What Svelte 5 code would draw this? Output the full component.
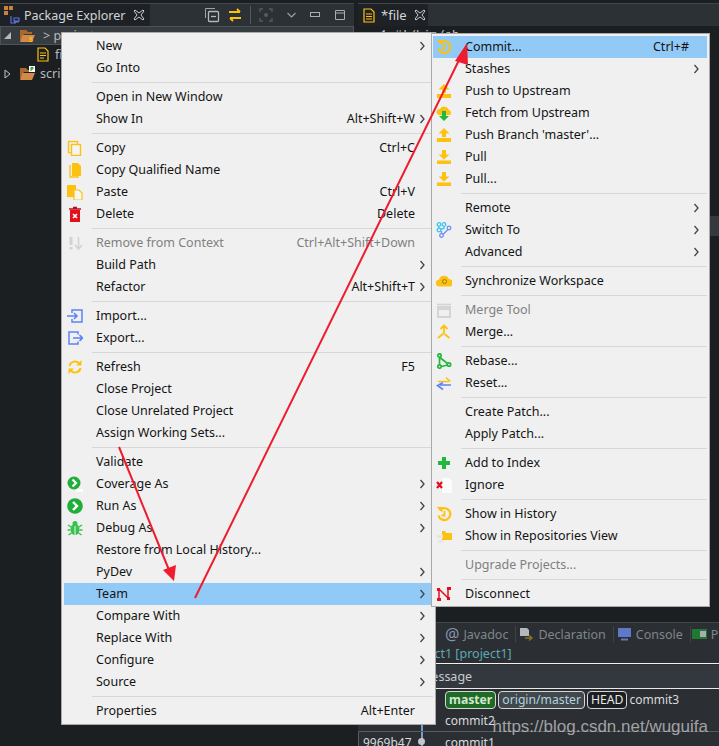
<script>
  const icons = {
    copy: '<rect x="1.500" y="1.500" width="9" height="11" fill="none" stroke="#fdc20f" stroke-width="1.400"/><rect x="4.500" y="4.500" width="9" height="11" fill="#f4f4f4" stroke="#fdc20f" stroke-width="1.400"/>',
    copyq: '<path d="M5 1h6l3 3v10H5z" fill="#fdc20f"/><path d="M3 3v12h9" fill="none" stroke="#fdc20f" stroke-width="1.400"/>',
    paste: '<path d="M0 1h9v12H0z" fill="#fdc20f"/><path d="M7 6h5l3 3v7H7z" fill="#f6f6f6" stroke="#fdc20f" stroke-width="1.200"/>',
    del: '<path d="M3 4h10v12H3z" fill="#e0101c"/><path d="M2 3h12M6 1.500h4" stroke="#c00d18" stroke-width="1.600"/><path d="M6 8l4 4M10 8l-4 4" stroke="#fff" stroke-width="1.600"/>',
    remove: '<path d="M4 2v8M4 12v2.500" stroke="#d2d2d2" stroke-width="3"/><path d="M11.500 2v11M8 10l3.500 4 3.500-4" fill="none" stroke="#d2d2d2" stroke-width="1.600"/>',
    imp: '<path d="M5 5V2h10v12H5v-3" fill="none" stroke="#5c82f5" stroke-width="1.500"/><path d="M0 8h9M7 5l3 3-3 3" fill="none" stroke="#5c82f5" stroke-width="1.600"/>',
    exp: '<path d="M11 4.500V2H2v12h9v-2.500" fill="none" stroke="#5c82f5" stroke-width="1.500"/><path d="M6 8h9M12.500 5l3 3-3 3" fill="none" stroke="#5c82f5" stroke-width="1.600"/>',
    refresh: '<path d="M2.500 7a5.500 5.500 0 0 1 10-2M13.500 9a5.500 5.500 0 0 1-10 2" fill="none" stroke="#fdc20f" stroke-width="2"/><path d="M14.500 1v5.500H9zM1.500 15V9.500H7z" fill="#fdc20f"/>',
    cover: '<circle cx="7" cy="7" r="6.500" fill="#1fae3a"/><path d="M5.500 3.500L9 7l-3.500 3.500" fill="none" stroke="#fff" stroke-width="2.200"/><rect x="9" y="13" width="7" height="3" fill="#fff"/>',
    run: '<circle cx="8" cy="8" r="7.800" fill="#1fae3a"/><path d="M6 4l4 4-4 4" fill="none" stroke="#fff" stroke-width="2.400"/>',
    debug: '<ellipse cx="8" cy="9.500" rx="4.500" ry="5.500" fill="#36c24c"/><circle cx="8" cy="3.500" r="2.500" fill="#36c24c"/><path d="M1 5l3 2M15 5l-3 2M.5 10h3M15.500 10h-3M1.500 15l3-2M14.500 15l-3-2" stroke="#36c24c" stroke-width="1.500"/><path d="M8 6v9" stroke="#f0f0f0" stroke-width="1"/>',
    history: '<path d="M3.500 4.500A6 6 0 1 1 2.500 9.500" fill="none" stroke="#fdc20f" stroke-width="2.200"/><path d="M.5 1h6v5.500z" fill="#fdc20f"/><path d="M8.500 5v4.500H5.500" fill="none" stroke="#fdc20f" stroke-width="1.800"/>',
    push: '<path d="M8 1l5.500 5.500H10V10H6V6.500H2.500z" fill="#fdc20f"/><path d="M1 11h14v4H1z" fill="#fdc20f"/>',
    pull: '<path d="M8 10.500L2.500 5.500H6V1h4v4.500h3.500z" fill="#fdc20f"/><path d="M1 11.500h14v3.500H1z" fill="#fdc20f"/>',
    fetch: '<path d="M3 10a3 3 0 0 1 1-6 5 5 0 0 1 9 1 3 3 0 0 1 1 5z" fill="#fdc20f"/><path d="M8 16l-5-5h3V6h4v5h3z" fill="#22b83c"/>',
    sw: '<g fill="none" stroke="#38c8ee" stroke-width="1.300"><circle cx="3" cy="2.500" r="1.800"/><circle cx="3" cy="8" r="1.800"/><circle cx="8" cy="2.500" r="1.800"/><path d="M3 4.500v2M8 4.500v2l-4 1"/></g><g fill="none" stroke="#6f8df5" stroke-width="1.300"><circle cx="5.500" cy="13.500" r="1.800"/><circle cx="13" cy="6" r="1.800"/><path d="M5.500 11.500V9M7 12.500l5-5"/></g>',
    sync: '<path d="M3.500 13.500a3.400 3.400 0 0 1-.500-6.800 5.200 5.200 0 0 1 10-.5 3.600 3.600 0 0 1 .500 7.300z" fill="#fdc20f"/><circle cx="8.500" cy="8.500" r="2" fill="none" stroke="#9a7a1a" stroke-width="1"/>',
    mtool: '<path d="M2 5h12v10H2z" fill="none" stroke="#d4d4d4" stroke-width="2"/><path d="M1 2.500h14" stroke="#d4d4d4" stroke-width="1.600"/><path d="M2 7h12" stroke="#d4d4d4" stroke-width="2"/>',
    merge: '<path d="M8 9V1.500M4.500 5L8 1.500 11.500 5M8 9l-6 5M8.500 10l5 4" fill="none" stroke="#fdc20f" stroke-width="1.800"/>',
    rebase: '<g fill="none" stroke="#22b83c" stroke-width="1.700"><circle cx="3.500" cy="2.500" r="1.700"/><circle cx="3.500" cy="13.500" r="1.700"/><circle cx="13" cy="11.500" r="1.700"/><path d="M3.500 4.500v7M4.500 5l7 5.500M5.500 13.500l6-1.500"/></g>',
    reset: '<path d="M2 6.500h11M10 2.500l4.500 4" fill="none" stroke="#fdc20f" stroke-width="1.600"/><path d="M15 10H4M7 14.500L1.500 10.500 7 7.500" fill="none" stroke="#5c82f5" stroke-width="1.600"/>',
    add: '<path d="M6 2h4v4h4v4h-4v4H6v-4H2V6h4z" fill="#22b83c"/>',
    ignore: '<path d="M6 1h7l3 3v12H6z" fill="#fbfbfb"/><path d="M1 5l5 6M6 5l-5 6" stroke="#e0101c" stroke-width="2.200"/>',
    repo: '<path d="M6 3h3l1 2h6v7H6z" fill="#fdc20f"/><path d="M1 7h6v3H1zM2 12h5v3H2z" fill="#e6e6e6"/>',
    disc: '<path d="M3 3v10M3 3l9 9V3" fill="none" stroke="#e0101c" stroke-width="1.500"/><path d="M1 2h3v3H1zM11 1h4v3h-4zM1 12h4v3H1zM11 11h3v3h-3z" fill="#e0101c"/>',
  }

  const sep = { sep: true }

  const mainMenu = [
    { label: 'New', more: true },
    { label: 'Go Into' },
    sep,
    { label: 'Open in New Window' },
    { label: 'Show In', key: 'Alt+Shift+W', more: true },
    sep,
    { label: 'Copy', key: 'Ctrl+C', icon: 'copy' },
    { label: 'Copy Qualified Name', icon: 'copyq' },
    { label: 'Paste', key: 'Ctrl+V', icon: 'paste' },
    { label: 'Delete', key: 'Delete', icon: 'del' },
    sep,
    { label: 'Remove from Context', key: 'Ctrl+Alt+Shift+Down', icon: 'remove', off: true },
    { label: 'Build Path', more: true },
    { label: 'Refactor', key: 'Alt+Shift+T', more: true },
    sep,
    { label: 'Import...', icon: 'imp' },
    { label: 'Export...', icon: 'exp' },
    sep,
    { label: 'Refresh', key: 'F5', icon: 'refresh' },
    { label: 'Close Project' },
    { label: 'Close Unrelated Project' },
    { label: 'Assign Working Sets...' },
    sep,
    { label: 'Validate' },
    { label: 'Coverage As', icon: 'cover', more: true },
    { label: 'Run As', icon: 'run', more: true },
    { label: 'Debug As', icon: 'debug', more: true },
    { label: 'Restore from Local History...' },
    { label: 'PyDev', more: true },
    { label: 'Team', more: true, active: true },
    { label: 'Compare With', more: true },
    { label: 'Replace With', more: true },
    { label: 'Configure', more: true },
    { label: 'Source', more: true },
    sep,
    { label: 'Properties', key: 'Alt+Enter' },
  ]

  const teamMenu = [
    { label: 'Commit...', key: 'Ctrl+#', icon: 'history', active: true },
    { label: 'Stashes', more: true },
    { label: 'Push to Upstream', icon: 'push' },
    { label: 'Fetch from Upstream', icon: 'fetch' },
    { label: "Push Branch 'master'...", icon: 'push' },
    { label: 'Pull', icon: 'pull' },
    { label: 'Pull...', icon: 'pull' },
    sep,
    { label: 'Remote', more: true },
    { label: 'Switch To', icon: 'sw', more: true },
    { label: 'Advanced', more: true },
    sep,
    { label: 'Synchronize Workspace', icon: 'sync' },
    sep,
    { label: 'Merge Tool', icon: 'mtool', off: true },
    { label: 'Merge...', icon: 'merge' },
    sep,
    { label: 'Rebase...', icon: 'rebase' },
    { label: 'Reset...', icon: 'reset' },
    sep,
    { label: 'Create Patch...' },
    { label: 'Apply Patch...' },
    sep,
    { label: 'Add to Index', icon: 'add' },
    { label: 'Ignore', icon: 'ignore' },
    sep,
    { label: 'Show in History', icon: 'history' },
    { label: 'Show in Repositories View', icon: 'repo' },
    sep,
    { label: 'Upgrade Projects...', off: true },
    sep,
    { label: 'Disconnect', icon: 'disc' },
  ]
</script>

{#snippet menu(items, cls)}
  <div class="menu {cls}">
    {#each items as item}
      {#if item.sep}
        <div class="sep"></div>
      {:else}
        <div class="item" class:active={item.active} class:off={item.off}>
          <span class="ico">
            {#if item.icon}
              <svg width="16" height="16" viewBox="0 0 16 16">{@html icons[item.icon]}</svg>
            {/if}
          </span>
          <span class="label">{item.label}</span>
          {#if item.key}<span class="key">{item.key}</span>{/if}
          <span class="more">
            {#if item.more}
              <svg width="7" height="10" viewBox="0 0 7 10"><path d="M1.500 1l3.500 4-3.500 4" fill="none" stroke="#444" stroke-width="1.300"/></svg>
            {/if}
          </span>
        </div>
      {/if}
    {/each}
  </div>
{/snippet}

<div class="ide">
  <div class="left">
    <div class="tabbar">
      <div class="tab">
        <svg width="18" height="18" viewBox="0 0 18 18">
          <path d="M0 0h4v4H0zM5 0h4v4H5zM0 5h4v4H0z" fill="#c8823c"/>
          <path d="M7 10v7h5M10 12h5v3h-5zM10 16h5" fill="none" stroke="#5872d8" stroke-width="1.200"/>
        </svg>
        <span>Package Explorer</span>
        <svg class="x" width="12" height="12" viewBox="0 0 12 12"><path d="M1 2l1-1 4 3 4-3 1 1-3 4 3 4-1 1-4-3-4 3-1-1 3-4z" fill="none" stroke="#c9ccce" stroke-width="1"/></svg>
      </div>
      <div class="tools">
        <svg width="16" height="16" viewBox="0 0 16 16"><path d="M1.500 11V1.500H11" fill="none" stroke="#9ea3a6"/><rect x="4.500" y="4.500" width="10" height="10" rx="1" fill="none" stroke="#b4b8ba" stroke-width="1.300"/><path d="M7 9.500h5" stroke="#b4b8ba" stroke-width="1.300"/></svg>
        <svg width="14" height="14" viewBox="0 0 14 14"><path d="M1 4h11M9 1l3 3M13 10H2M5 13l-3-3" fill="none" stroke="#fdc20f" stroke-width="1.800"/></svg>
        <i class="bar"></i>
        <svg width="14" height="14" viewBox="0 0 14 14"><path d="M1 4V1h3M10 1h3v3M13 10v3h-3M4 13H1v-3" fill="none" stroke="#575b5e" stroke-width="1.300"/><circle cx="7" cy="7" r="2" fill="#575b5e"/></svg>
        <svg class="wide" width="9" height="6" viewBox="0 0 9 6"><path d="M.5 1l4 4 4-4" fill="none" stroke="#9ea3a6" stroke-width="1.100"/></svg>
        <svg class="wide" width="11" height="6" viewBox="0 0 11 6"><rect x=".5" y=".5" width="9" height="4" fill="none" stroke="#a9adb0"/></svg>
        <svg class="wide" width="11" height="11" viewBox="0 0 11 11"><path d="M.5.500h9v9h-9zM.5 3h9" fill="none" stroke="#a9adb0"/></svg>
      </div>
    </div>
    <div class="tree">
      <div class="node selected">
        <svg class="twist" width="9" height="9" viewBox="0 0 9 9"><path d="M8 1v7H1z" fill="#b6babc"/></svg>
        <svg width="17" height="15" viewBox="0 0 17 15"><path d="M1 2h6l2 2h4v2H5l-4 7z" fill="#a8682e"/><path d="M3.500 7H16l-3 7H1z" fill="#d28a48"/><text x="10" y="14" class="mark">s</text></svg>
        <span>&gt; project</span>
      </div>
      <div class="node child">
        <svg width="13" height="15" viewBox="0 0 13 15"><path d="M1 1h7l3 3v10H1zM3 6h6M3 8.500h6M3 11h4" fill="none" stroke="#fdc20f" stroke-width="1.200"/></svg>
        <span>file</span>
      </div>
      <div class="node root">
        <svg class="twist" width="7" height="10" viewBox="0 0 7 10"><path d="M1 1l5 4-5 4z" fill="none" stroke="#c4c7c9"/></svg>
        <svg class="folder" width="17" height="15" viewBox="0 0 17 15"><path d="M1 2h6l2 2h4v2H5l-4 7z" fill="#a8682e"/><path d="M3.500 7H16l-3 7H1z" fill="#d28a48"/><rect x="10" y="0" width="6" height="6" fill="#fff"/><path d="M12 5V1.500h2v1.500h-2" fill="none" stroke="#1a8a2e"/></svg>
        <span>scripts</span>
      </div>
    </div>
  </div>

  <div class="right">
    <div class="tabbar">
      <div class="tab edit">
        <svg width="13" height="15" viewBox="0 0 13 15"><path d="M1 1h7l3 3v10H1zM3 6h6M3 8.500h6M3 11h6" fill="none" stroke="#fdc20f" stroke-width="1.200"/></svg>
        <span>*file</span>
        <svg class="x" width="12" height="12" viewBox="0 0 12 12"><path d="M1 2l1-1 4 3 4-3 1 1-3 4 3 4-1 1-4-3-4 3-1-1 3-4z" fill="none" stroke="#c9ccce" stroke-width="1"/></svg>
      </div>
    </div>
    <div class="editor">
      <div class="code">1 #!/bin/sh</div>
      <div class="curline"></div>
    </div>
    <div class="panel">
      <div class="ptabs">
        <span class="ptab"><span class="at">@</span>Javadoc</span>
        <span class="ptab">
          <svg width="15" height="15" viewBox="0 0 15 15"><path d="M1 1h7l2 2v6H1z" fill="#b4b8ba"/><path d="M6 11h6M10 8.500l3 2.500-3 2.500" fill="none" stroke="#8a7420" stroke-width="1.400"/></svg>
          Declaration
        </span>
        <span class="ptab">
          <svg width="15" height="14" viewBox="0 0 15 14"><rect x="1" y="1" width="13" height="9" fill="#5f79c8"/><path d="M4 12.500h7" stroke="#5f79c8" stroke-width="2"/></svg>
          Console
        </span>
        <span class="ptab last">
          <svg width="15" height="10" viewBox="0 0 15 10"><rect width="15" height="10" fill="#1d7a30"/><rect x="8" y="2" width="6" height="6" fill="#a9adb0"/></svg>
          Pr
        </span>
      </div>
      <div class="crumb">project1 [project1]</div>
      <div class="thead">Message</div>
      <div class="row">
        <span class="cid"></span><span class="cgraph"></span>
        <span class="tag master">master</span><span class="tag origin">origin/master</span><span class="tag head">HEAD</span><span>commit3</span>
      </div>
      <div class="row"><span class="cid">70f5c3a</span><span class="cgraph line"></span><span>commit2</span></div>
      <div class="row sel"><span class="cid">9969b47</span><span class="cgraph line dot"></span><span>commit1</span></div>
    </div>
  </div>

  {@render menu(mainMenu, 'main')}
  {@render menu(teamMenu, 'team')}

  <svg class="arrows" width="719" height="746" viewBox="0 0 719 746">
    <path d="M119 447L169 570M195 598L461 56" stroke="#ee1c2e" stroke-width="2" fill="none"/>
    <path d="M174 581L163 570L176 565zM467 43L455 61L468 65z" fill="#ee1c2e"/>
  </svg>

  <div class="mark-url">https://blog.csdn.net/wuguifa</div>
</div>

<style>
  :global(body) {
    background: #1b1f22;
  }

  .ide {
    position: relative;
    display: flex;
    width: 719px;
    height: 746px;
    overflow: hidden;
    background: #1b1f22;
    font-family: "Noto Sans", "Open Sans", sans-serif;
    font-size: 12.5px;
  }

  .left {
    width: 354px;
    flex: none;
    margin-right: 4px;
  }

  .right {
    flex: 1;
    display: flex;
    flex-direction: column;
    min-width: 0;
  }

  .tabbar {
    display: flex;
    align-items: stretch;
    height: 23px;
    margin-top: 3px;
    background: #2c3135;
    border-top: 1px solid #41464a;
    box-sizing: border-box;
  }

  .tab {
    display: flex;
    align-items: center;
    gap: 2px;
    flex: none;
    width: 150px;
    padding-left: 4px;
    box-sizing: border-box;
    background: #1e2226;
    color: #d2d5d7;
    white-space: nowrap;
  }

  .tab .x {
    margin-left: 6px;
  }

  .tab.edit {
    width: 70px;
    gap: 5px;
    padding-left: 5px;
    font-size: 13px;
  }

  .tab.edit .x {
    margin-left: 2px;
  }

  .tools {
    display: flex;
    align-items: center;
    flex: 1;
    gap: 8px;
    padding-left: 54px;
  }

  .tools .wide {
    margin-left: 6px;
  }

  .bar {
    width: 1px;
    height: 18px;
    background: #565a5d;
  }

  .tree {
    color: #b7bbbe;
  }

  .node {
    display: flex;
    align-items: center;
    gap: 5px;
    height: 19px;
  }

  .selected {
    gap: 7px;
    background: #373c41;
    box-shadow: inset 0 0 0 1px #4d5358;
    padding-left: 3px;
  }

  .child {
    padding-left: 37px;
  }

  .root {
    padding-left: 4px;
    gap: 8px;
  }

  .root .folder {
    margin-right: -4px;
  }

  .mark {
    font: bold 8px "Noto Sans", sans-serif;
    fill: #fdc20f;
  }

  .editor {
    position: relative;
    flex: 1;
    background: #1b1f22;
  }

  .code {
    color: #c8ccce;
    font: 12px "Liberation Mono", monospace;
    padding: 3px 0 0 22px;
  }

  .curline {
    position: absolute;
    top: 190px;
    right: 0;
    left: 0;
    height: 20px;
    background: #34393d;
  }

  .panel {
    height: 124px;
    flex: none;
    background: #2b2f33;
    color: #d8dadc;
    border-top: 1px solid #41464a;
    box-sizing: border-box;
    font-size: 12px;
  }

  .ptabs {
    display: flex;
    align-items: center;
    height: 22px;
    padding-left: 84px;
    color: #7f868c;
    background: #2b2f33;
    font-size: 12.500px;
    white-space: nowrap;
  }

  .ptab {
    display: flex;
    align-items: center;
    gap: 4px;
    padding: 0 7px 0 3px;
    border-right: 1px solid #3d4246;
  }

  .ptab.last {
    padding-left: 1px;
  }

  .at {
    font-size: 16px;
    line-height: 1;
    color: #8596ad;
  }

  .crumb {
    height: 18px;
    line-height: 18px;
    padding-left: 46px;
    color: #5ea8b0;
    font-size: 12.500px;
    border-bottom: 3px double #f0f0f0;
    margin-bottom: -1px;
  }

  .thead {
    display: flex;
    align-items: center;
    height: 24px;
    padding-left: 62px;
    background: #32383e;
    color: #c8ccce;
    font-size: 12.500px;
    border-bottom: 1px solid #e8e8e8;
    box-sizing: border-box;
  }

  .row {
    display: flex;
    align-items: center;
    height: 21px;
  }

  .row.sel {
    border-top: 1px solid #565b60;
    border-left: 1px solid #565b60;
    height: 20px;
  }

  .cid {
    width: 56px;
    flex: none;
    padding-left: 4px;
    box-sizing: border-box;
  }

  .sel .cid {
    width: 55px;
  }

  .cgraph {
    position: relative;
    width: 31px;
    flex: none;
    align-self: stretch;
  }

  .line::before {
    content: "";
    position: absolute;
    top: 0;
    bottom: 0;
    left: 7px;
    width: 2px;
    background: #7a9ad0;
  }

  .dot::after {
    content: "";
    position: absolute;
    top: 6px;
    left: 4px;
    width: 7px;
    height: 7px;
    border-radius: 50%;
    background: #c4c7c9;
  }

  .tag {
    display: inline-block;
    height: 16px;
    line-height: 15px;
    margin-right: 2px;
    padding: 0 3px;
    border: 1px solid #d4d6d8;
    border-radius: 4px;
    font-size: 12.200px;
  }

  .master {
    background: #1f6a24;
    color: #cfe8cf;
    font-weight: 700;
  }

  .origin {
    background: #40474d;
    color: #b4d2dc;
  }

  .head {
    background: #1b1f22;
    color: #e8e8e8;
  }

  .menu {
    position: absolute;
    box-sizing: border-box;
    padding: 2px;
    background: #f0f0f0;
    border: 1px solid #a9a9a9;
    color: #141414;
  }

  .menu.main {
    top: 32px;
    left: 61px;
    width: 375px;
    height: 693px;
  }

  .menu.team {
    top: 33px;
    left: 431px;
    width: 279px;
    height: 574px;
    padding-left: 1px;
  }

  .item {
    display: flex;
    align-items: center;
    height: 22px;
    padding-bottom: 1px;
    box-sizing: border-box;
  }

  .item.active {
    background: #91c9f7;
  }

  .item.off {
    color: #808080;
  }

  .ico {
    display: flex;
    align-items: center;
    justify-content: center;
    flex: none;
    width: 21px;
  }

  .label {
    flex: 1;
    margin-left: 11px;
    white-space: nowrap;
  }

  .key {
    white-space: nowrap;
  }

  .more {
    display: flex;
    align-items: center;
    justify-content: center;
    flex: none;
    width: 14px;
    margin: 0 4px 0 0;
  }

  .sep {
    height: 1px;
    margin: 3px 0 3px 28px;
    background: #d7d7d7;
  }

  .arrows {
    position: absolute;
    top: 0;
    left: 0;
    pointer-events: none;
  }

  .mark-url {
    position: absolute;
    right: 11px;
    bottom: 9px;
    font: 17px "Liberation Sans", sans-serif;
    color: rgba(215, 215, 215, 0.7);
  }
</style>
